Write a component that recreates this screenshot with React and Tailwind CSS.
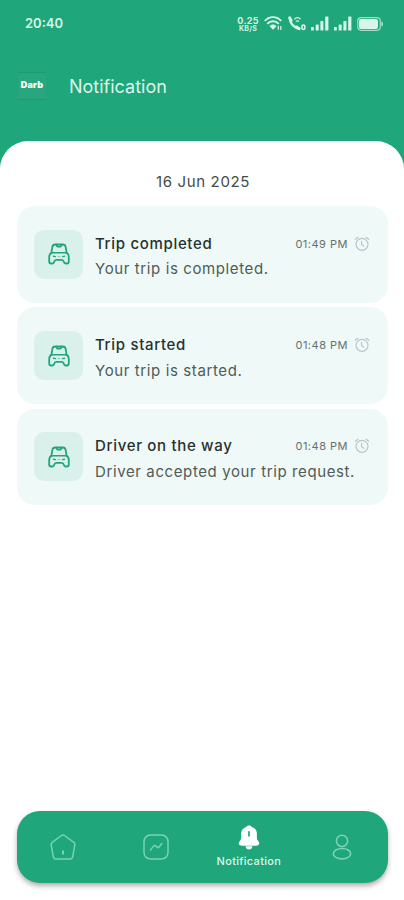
const notifications = [
  { id: 1, title: "Trip completed", message: "Your trip is completed.", time: "01:49 PM" },
  { id: 2, title: "Trip started", message: "Your trip is started.", time: "01:48 PM" },
  { id: 3, title: "Driver on the way", message: "Driver accepted your trip request.", time: "01:48 PM" },
];

const WifiIcon = () => (
  <svg width="19" height="15" viewBox="0 0 19 15" fill="none" stroke="currentColor" strokeWidth="1.9">
    <path d="M.8 5C5-.2 13-.2 17.200 5M3.300 7.900c3-3.600 8.400-3.600 11.400 0" />
    <path d="M5.500 10.200c2-2.300 5-2.300 7 0L9 13.800z" fill="currentColor" stroke="none" />
    <path d="M14.300 13.800v-4M16.800 10v4" strokeWidth="1.200" />
  </svg>
);

const CallIcon = () => (
  <svg width="18" height="15" viewBox="0 0 18 15" fill="none" stroke="currentColor">
    <path d="M1.700 2.200c.3 5.500 4.300 9.700 9.800 10.300" strokeWidth="2.400" />
    <path d="M1.700 1.800l1.500 2.700M8.500 11l2.700 1.700" strokeWidth="2.800" strokeLinecap="round" />
    <path d="M6.500 3.200c1.800-2 4.200-2 6 0M8 5.500c1-.9 2-.9 3 0" strokeWidth="1.300" />
    <rect x="14" y="9" width="2.800" height="4.400" rx="1.200" strokeWidth="1.600" />
  </svg>
);

const SignalIcon = () => (
  <svg width="18" height="15" viewBox="0 0 18 15" fill="currentColor">
    <rect x="0" y="11" width="2.800" height="3.500" rx=".6" />
    <rect x="4.700" y="8.500" width="3" height="6" rx=".6" />
    <rect x="9.400" y="5" width="3" height="9.500" rx=".6" />
    <rect x="14.200" y=".5" width="3.200" height="14" rx=".6" />
  </svg>
);

const BatteryIcon = () => (
  <svg width="27" height="14" viewBox="0 0 27 14" fill="none">
    <rect x=".7" y=".7" width="22.600" height="12.600" rx="3.500" stroke="currentColor" strokeOpacity=".7" strokeWidth="1.200" />
    <rect x="2" y="2" width="19" height="10" rx="2" fill="currentColor" />
    <path d="M24.500 4.300c1.800 1.200 1.800 4.200 0 5.400z" fill="currentColor" />
  </svg>
);

const CarIcon = () => (
  <svg width="22" height="22" viewBox="0 0 22 22" fill="none" stroke="#21a67a" strokeWidth="1.800" strokeLinejoin="round" strokeLinecap="round">
    <path d="M3.400 9.800L4.300 4.200C4.600 2.300 5.400 1.500 7.200 1.500h7.600c1.800 0 2.600.8 2.900 2.700l.9 5.600" />
    <path d="M8.300 1.800l1 1.900h3.400l1-1.900" />
    <path d="M3.600 9.700h14.800" strokeWidth="1.500" />
    <path d="M3.400 9.900c-1.700.9-2.200 2.400-2.200 4.300v4.300c0 1.300.7 2 1.900 2h1.300c1.200 0 1.500-.6 1.800-1.800.3-1.300.9-1.900 2.200-1.900h5.200c1.300 0 1.900.6 2.200 1.900.3 1.200.6 1.800 1.800 1.800h1.300c1.200 0 1.900-.7 1.900-2v-4.300c0-1.900-.5-3.400-2.200-4.300" />
    <path d="M5.500 13.300l1.900.3M16.500 13.300l-1.900.3" strokeWidth="1.400" />
    <path d="M10 13.600h2" strokeWidth="1" strokeOpacity=".5" />
  </svg>
);

const AlarmIcon = () => (
  <svg width="16" height="16" viewBox="0 0 16 16" fill="none" stroke="#bcc7c4" strokeWidth="1.200" strokeLinecap="round">
    <circle cx="8" cy="8.300" r="6" />
    <path d="M7.600 5.300v3.400l2.300 1.500M1.300 3.300l2.700-2M14.700 3.300l-2.700-2" />
  </svg>
);

const HomeIcon = () => (
  <svg width="26" height="26" viewBox="0 0 26 26" fill="none" stroke="currentColor" strokeWidth="1.500" strokeLinejoin="round">
    <path d="M11.500 1.500c.9-.7 2.100-.7 3 0l9.300 6.800c.9.700 1.200 1.600 1 2.700l-2.100 11.700c-.3 1.500-1.200 2.300-2.700 2.300H6c-1.500 0-2.400-.8-2.700-2.300L1.200 11c-.2-1.100.1-2 1-2.700z" />
    <path d="M13 16.500v4" strokeWidth="2" />
  </svg>
);

const ActivityIcon = () => (
  <svg width="26" height="26" viewBox="0 0 26 26" fill="none" stroke="currentColor" strokeWidth="1.500" strokeLinecap="round" strokeLinejoin="round">
    <rect x="1" y="1" width="24" height="24" rx="6.500" />
    <path d="M7.500 16l3.200-4.100c.4-.5 1-.5 1.500-.2l2.100 1.700c.5.400 1.100.3 1.500-.2l3-3.700" />
  </svg>
);

const BellIcon = () => (
  <svg width="22" height="26" viewBox="0 0 22 26" fill="#fff">
    <path d="M11 .5c1.400 0 2.300.6 2.700 1.400 3.300.9 5.200 3.500 5.200 6.800v4.600c0 1 .4 1.700 1.200 2.600 1 1 1.400 1.900 1.100 2.900-.4 1.400-1.700 1.900-3.300 1.900H4.100c-1.600 0-2.900-.5-3.300-1.900-.3-1 .1-1.900 1.100-2.900.8-.9 1.200-1.600 1.200-2.600V8.700c0-3.300 1.900-5.900 5.200-6.800C8.700 1.100 9.600.5 11 .5z" />
    <path d="M7.500 21.300h7c-.3 2-1.600 3.300-3.500 3.300s-3.200-1.300-3.500-3.300z" />
    <path d="M11 6.800v4" stroke="#1fa67a" strokeWidth="1.700" strokeLinecap="round" />
  </svg>
);

const ProfileIcon = () => (
  <svg width="20" height="26" viewBox="0 0 20 26" fill="none" stroke="currentColor" strokeWidth="1.600">
    <circle cx="10" cy="6.900" r="5.600" />
    <ellipse cx="10" cy="19.700" rx="8.700" ry="5.200" />
  </svg>
);

const NotificationCard = ({ title, message, time }) => (
  <div className="h-[96.5px] rounded-[18px] bg-[#eff9f7] pl-[17px] pr-[18px] flex items-center">
    <div className="w-[49px] h-[49px] shrink-0 rounded-[10px] bg-[#daf0ea] flex items-center justify-center">
      <CarIcon />
    </div>
    <div className="ml-3 flex-1 pt-[5px]">
      <div className="flex items-center justify-between h-[25px]">
        <p className="text-[15px] font-medium tracking-[0.68px] text-[#27302e]">{title}</p>
        <div className="flex items-center gap-[6px]">
          <span className="text-[11px] tracking-[0.5px] text-[#66716e]">{time}</span>
          <AlarmIcon />
        </div>
      </div>
      <p className="h-[26px] leading-[26px] text-[15px] tracking-[0.61px] whitespace-nowrap text-[#515b58]">{message}</p>
    </div>
  </div>
);

export default function App() {
  return (
    <div className="w-[404px] h-[900px] overflow-hidden bg-[#1fa67a] flex flex-col font-['Inter',sans-serif]">
      {/* Status bar */}
      <div className="h-[47px] shrink-0 pl-[25px] pr-5 flex items-center justify-between text-[#d8f5e9]">
        <span className="text-[13px] font-semibold">20:40</span>
        <div className="flex items-center gap-[5px]">
          <div className="w-[22px] flex flex-col items-center font-bold">
            <span className="text-[9px] leading-[9px] tracking-[0.3px]">0.25</span>
            <span className="text-[7px] leading-[7px] tracking-[0.3px] whitespace-nowrap">KB/S</span>
          </div>
          <WifiIcon />
          <CallIcon />
          <SignalIcon />
          <SignalIcon />
          <BatteryIcon />
        </div>
      </div>

      {/* Header */}
      <div className="h-[94px] shrink-0 pl-[18px] pb-4 flex items-center">
        <div className="w-7 h-7 bg-[#28a67d] border-y border-[#229a70] flex items-center justify-center text-[9px] leading-none font-black tracking-[0.2px] text-white">
          <span className="pb-[3px]">Darb</span>
        </div>
        <h1 className="ml-[23px] text-[18px] text-[#ddf7ed]">Notification</h1>
      </div>

      <div className="flex-1 rounded-t-[28px] bg-white px-[17px] flex flex-col">
        <p className="mt-[29px] ml-[2px] h-[24px] leading-[24px] text-center text-[15px] tracking-[0.65px] text-[#444b49]">16 Jun 2025</p>
        <div className="mt-3 mr-[-1px] flex flex-col gap-[4.8px]">
          {notifications.map((n) => (
            <NotificationCard key={n.id} title={n.title} message={n.message} time={n.time} />
          ))}
        </div>

        {/* Bottom navigation */}
        <nav className="mt-auto mb-[17px] mr-[-1px] h-[72px] rounded-[23px] bg-[#1fa67a] shadow-[0_3px_5px_rgba(70,50,55,0.4)] grid grid-cols-4 items-center justify-items-center text-[#79d3b3]">
          <HomeIcon />
          <ActivityIcon />
          <div className="flex flex-col items-center">
            <BellIcon />
            <span className="mt-[3px] text-[11px] leading-[15px] font-medium tracking-[0.3px] text-[#dcf8ed]">Notification</span>
          </div>
          <ProfileIcon />
        </nav>
      </div>
    </div>
  );
}
